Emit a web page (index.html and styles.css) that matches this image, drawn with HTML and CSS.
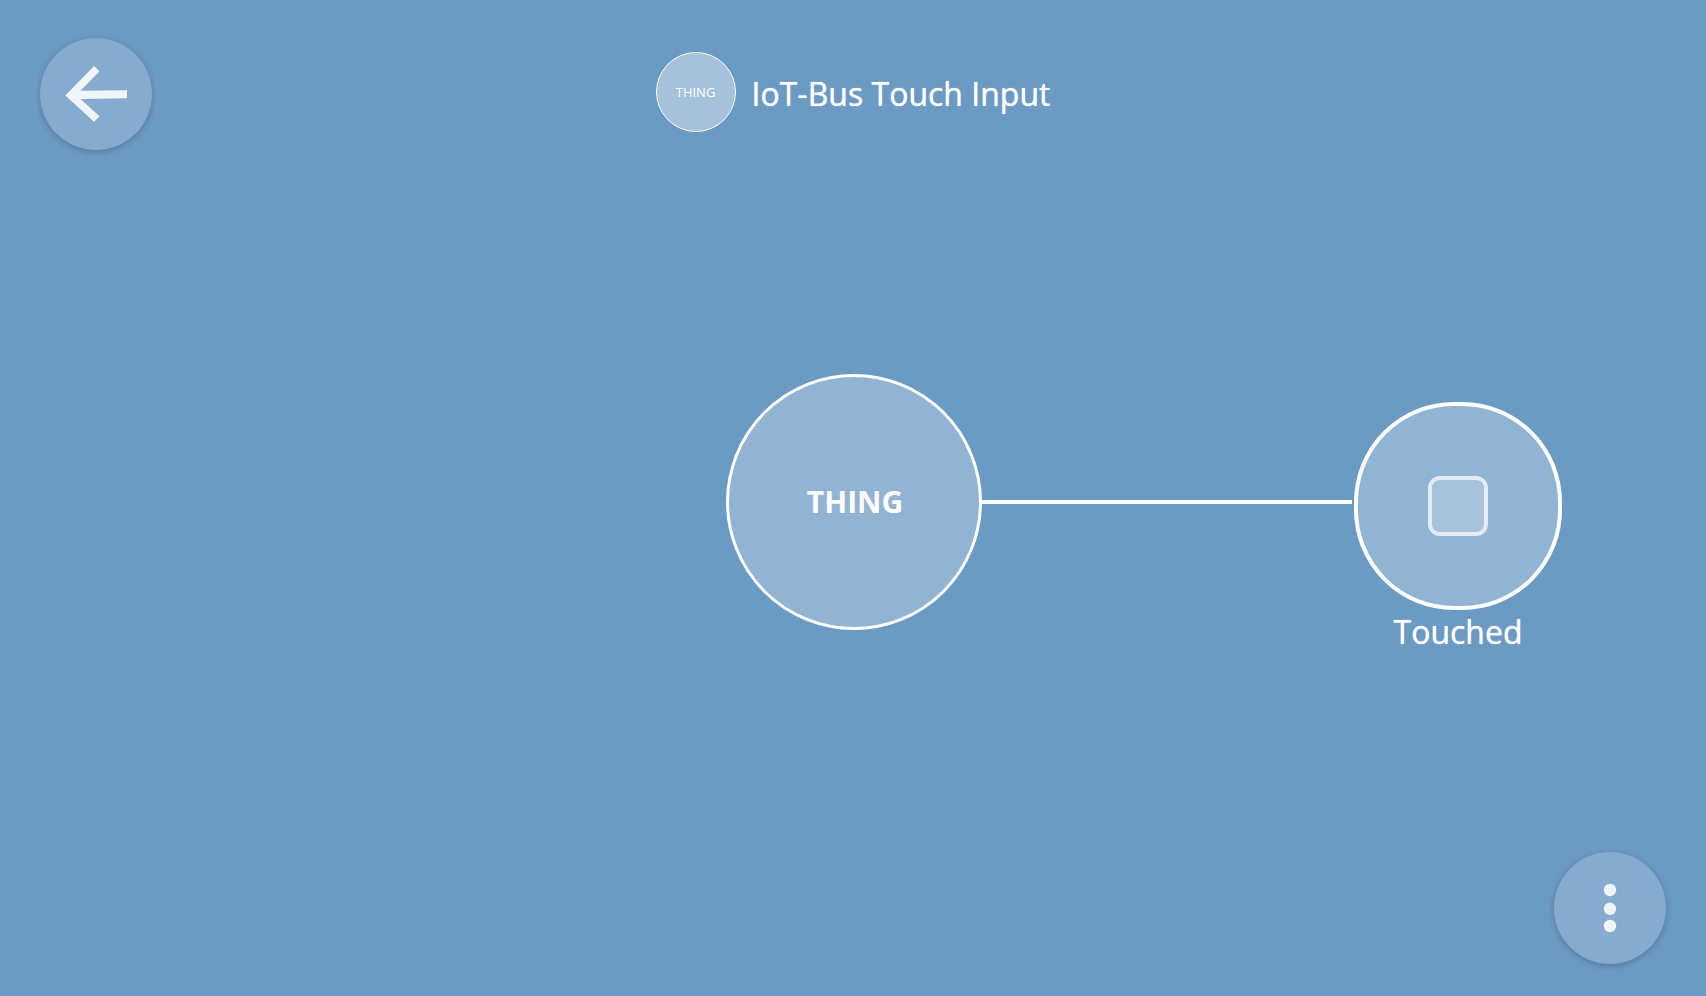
FILE: index.html
```html
<!DOCTYPE html>
<html lang="en">
<head>
<meta charset="utf-8">
<meta name="viewport" content="width=device-width, initial-scale=1">
<title>IoT-Bus Touch Input</title>
<link rel="stylesheet" href="styles.css">
</head>
<body>
<div class="app">
  <header class="header">
    <button class="fab" type="button" aria-label="Back">
      <svg class="fab-icon" viewBox="0 0 112 112" aria-hidden="true">
        <path d="M25.3 57.4 L54 28 L59.5 33.2 L40.5 52.8 L87 52.2 V60.2 L40.5 60.9 L59.5 78.2 L54 83.8 Z"/>
      </svg>
    </button>
    <div class="heading">
      <span class="badge">THING</span>
      <h1 class="title">IoT-Bus Touch Input</h1>
    </div>
  </header>
  <main class="canvas">
    <div class="link"></div>
    <button class="thing" type="button">THING</button>
    <div class="sensor">
      <label class="sensor-ring" for="touched"><input class="sensor-box" type="checkbox" id="touched"></label>
      <label class="sensor-name" for="touched">Touched</label>
    </div>
  </main>
  <footer class="footer">
    <button class="fab" type="button" aria-label="Menu">
      <svg class="fab-icon" viewBox="0 0 112 112" aria-hidden="true">
        <circle cx="56" cy="38" r="6.2"/>
        <circle cx="56" cy="56.8" r="6.2"/>
        <circle cx="56" cy="74" r="6.2"/>
      </svg>
    </button>
  </footer>
</div>
</body>
</html>
```
FILE: styles.css
```css
* {
  box-sizing: border-box;
}

body {
  margin: 0;
  background: #6b9ac3;
  color: #fff;
  font-family: "Open Sans", "Noto Sans", sans-serif;
}

button {
  padding: 0;
  color: inherit;
  font: inherit;
  cursor: pointer;
}

.app {
  position: relative;
  display: flex;
  flex-direction: column;
  justify-content: space-between;
  min-height: 100vh;
}

.header {
  display: grid;
  grid-template-columns: 1fr auto 1fr;
  align-items: center;
  padding: 38px 40px 0;
}

.heading {
  display: flex;
  align-items: center;
  gap: 16px;
  padding-bottom: 4px;
}

.badge {
  display: flex;
  align-items: center;
  justify-content: center;
  width: 80px;
  height: 80px;
  border: 1px solid #fff;
  border-radius: 50%;
  background: #a5c2da;
  font-size: 13px;
}

.title,
.sensor-name {
  font-size: 32px;
  font-weight: 500;
  line-height: 44px;
  text-shadow: 0 0 1px #fff;
}

.title {
  margin: 0;
  padding-top: 4px;
}

.fab {
  width: 112px;
  height: 112px;
  border: 0;
  border-radius: 50%;
  background: #86abce;
  box-shadow: 0 2px 6px rgba(0, 0, 0, 0.2);
}

.fab-icon {
  display: block;
  width: 100%;
  fill: #f0f5fa;
}

.footer {
  display: flex;
  justify-content: flex-end;
  padding: 0 40px 32px;
}

.thing,
.link,
.sensor {
  position: absolute;
}

.thing {
  top: calc(50% - 124px);
  left: calc(50% - 127px);
  width: 256px;
  height: 256px;
  padding: 0 0 2px 2px;
  border: 3px solid #fff;
  border-radius: 50%;
  background: #93b3d3;
  font-size: 30px;
  font-weight: 700;
}

.link {
  top: calc(50% + 2px);
  left: calc(50% + 128px);
  width: 371px;
  height: 4px;
  background: #fff;
}

.sensor {
  top: calc(50% - 96px);
  left: calc(50% + 501px);
  display: flex;
  flex-direction: column;
  align-items: center;
}

.sensor-ring {
  display: flex;
  align-items: center;
  justify-content: center;
  width: 208px;
  height: 208px;
  border: 4px solid #fff;
  border-radius: 100px;
  background: #92b4d3;
}

.sensor-box {
  appearance: none;
  width: 60px;
  height: 60px;
  margin: 0;
  border: 4px solid #e3ecf4;
  border-radius: 12px;
  background: #a7c3dc;
}
```
